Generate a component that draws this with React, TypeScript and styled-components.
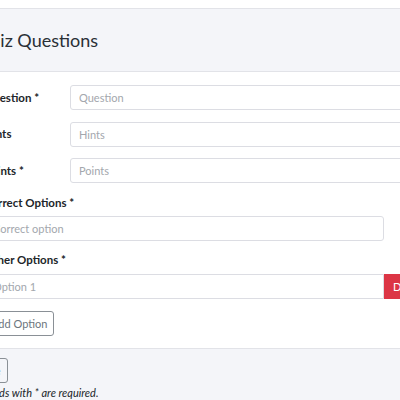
import React from "react";
import styled, { createGlobalStyle } from "styled-components";

const Global = createGlobalStyle`
  html, body { margin: 0; padding: 0; background: #ffffff; overflow: hidden; }
  body { font-family: Lato, "Open Sans", sans-serif; color: #212529; }
`;

const Page = styled.div`
  padding-top: 8px;
  margin-left: -44px;
  width: 514px;
`;

const Card = styled.div`
  border: 1px solid #e2e3e8;
  border-radius: 4px;
  background: #fff;
`;

const Header = styled.div`
  background: #f4f5f9;
  border-bottom: 1px solid #e2e3e8;
  height: 62px;
  display: flex;
  align-items: center;
  padding: 0 19px;
`;

const Title = styled.h3`
  margin: 0;
  font-size: 18px;
  font-weight: 400;
  color: #2a2f36;
`;

const Body = styled.div`
  padding: 13px 27px 12px 27px;
`;

const FieldRow = styled.div`
  display: grid;
  grid-template-columns: 86px 1fr;
  align-items: center;
  margin-bottom: 11.5px;
`;

const Label = styled.label`
  font-size: 11.5px;
  font-weight: 700;
  color: #212529;
  line-height: 16px;
  display: block;
`;

const BlockLabel = styled(Label)<{ $gap?: number }>`
  margin-bottom: ${(p) => p.$gap ?? 5}px;
`;

const Input = styled.input<{ $grouped?: boolean }>`
  box-sizing: border-box;
  width: 100%;
  height: 25px;
  border: 1px solid #dcdde3;
  border-radius: ${(p) => (p.$grouped ? "3px 0 0 3px" : "3px")};
  padding: 0 8px;
  font-family: Lato, "Open Sans", sans-serif;
  font-size: 11px;
  color: #495057;
  background: #fff;
  outline: none;
  &::placeholder { color: #a3a7ad; }
`;

const OptionBlock = styled.div`
  margin-top: 12px;
`;

const OptionRow = styled.div<{ $last?: boolean }>`
  display: grid;
  grid-template-columns: 1fr 58px;
  margin-bottom: ${(p) => (p.$last ? "0" : "11px")};
`;

const DeleteButton = styled.button`
  background: #dc3545;
  color: #fff;
  border: none;
  border-radius: 0 3px 3px 0;
  font-family: Lato, "Open Sans", sans-serif;
  font-size: 11px;
  padding: 0 9px;
  text-align: left;
  height: 25px;
`;

const OutlineButton = styled.button<{ $pad?: number }>`
  background: transparent;
  color: #6c757d;
  border: 1px solid #8a9096;
  border-radius: 3px;
  font-family: Lato, "Open Sans", sans-serif;
  font-size: 11px;
  height: 25px;
  padding: 0 ${(p) => p.$pad ?? 6}px;
  cursor: pointer;
`;

const AddRow = styled.div`
  margin-top: 12px;
`;

const Footer = styled.div`
  background: #f4f5f9;
  border-top: 1px solid #e2e3e8;
  padding: 9px 14px 10px;
`;

const Note = styled.p`
  margin: 3px 0 0;
  font-size: 11px;
  font-style: italic;
  color: #212529;
`;

export default function App() {
  return (
    <>
      <Global />
      <Page>
        <Card>
          <Header>
            <Title>Quiz Questions</Title>
          </Header>
          <Body>
            <FieldRow>
              <Label>Question *</Label>
              <Input placeholder="Question" />
            </FieldRow>
            <FieldRow>
              <Label>Hints</Label>
              <Input placeholder="Hints" />
            </FieldRow>
            <FieldRow>
              <Label>Points *</Label>
              <Input placeholder="Points" />
            </FieldRow>
            <OptionBlock>
              <BlockLabel>Correct Options *</BlockLabel>
              <OptionRow>
                <Input placeholder="Correct option" />
              </OptionRow>
              <BlockLabel $gap={6}>Other Options *</BlockLabel>
              <OptionRow $last>
                <Input $grouped placeholder="Option 1" />
                <DeleteButton>Delete</DeleteButton>
              </OptionRow>
            </OptionBlock>
            <AddRow>
              <OutlineButton>Add Option</OutlineButton>
            </AddRow>
          </Body>
          <Footer>
            <OutlineButton $pad={6}>Save</OutlineButton>
            <Note>All fields with * are required.</Note>
          </Footer>
        </Card>
      </Page>
    </>
  );
}
